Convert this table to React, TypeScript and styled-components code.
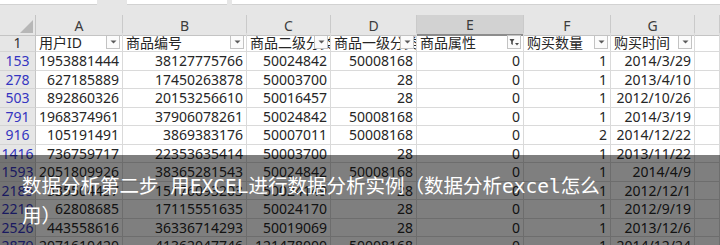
import styled, { createGlobalStyle } from "styled-components";

const GlobalStyle = createGlobalStyle`
  html, body {
    margin: 0;
    padding: 0;
    background: #fff;
  }
  body {
    width: 720px;
    height: 245px;
    overflow: hidden;
  }
`;

const COLS = "36px 87px 124px 84px 86px 107px 87px 84px 1fr";

const Sheet = styled.div`
  position: relative;
  width: 720px;
  height: 245px;
  overflow: hidden;
  background: #fff;
  font-family: "Noto Sans", "Noto Sans CJK SC", sans-serif;
  font-size: 14px;
  color: #262626;
`;

const FormulaBar = styled.div`
  display: flex;
  height: 15px;
  background: #e6e6e6;
`;

const InputBox = styled.div<{ $w?: number; $ml: number }>`
  height: 4px;
  width: ${({ $w }) => ($w ? `${$w}px` : "auto")};
  flex: ${({ $w }) => ($w ? "none" : 1)};
  margin-left: ${({ $ml }) => $ml}px;
  background: #fff;
  border-bottom: 1px solid #d2d2d2;
`;

const Row = styled.div<{ $h: number }>`
  display: grid;
  grid-template-columns: ${COLS};
  height: ${({ $h }) => $h}px;
`;

const Corner = styled.div`
  position: relative;
  background: #e6e6e6;
  border-right: 1px solid #c4c4c4;
  border-bottom: 1px solid #c4c4c4;
  &::after {
    content: "";
    position: absolute;
    right: 2px;
    bottom: 2px;
    border-style: solid;
    border-width: 0 0 13px 13px;
    border-color: transparent transparent #b7b7b7 transparent;
  }
`;

const ColHead = styled.div<{ $selected?: boolean }>`
  display: flex;
  align-items: center;
  justify-content: center;
  background: ${({ $selected }) => ($selected ? "#d2d2d2" : "#e6e6e6")};
  color: #3c3c3c;
  border-right: 1px solid #cacaca;
  border-bottom: ${({ $selected }) =>
    $selected ? "2px solid #8c8c8c" : "1px solid #c4c4c4"};
  box-sizing: border-box;
  font-size: 14px;
`;

const RowHead = styled.div<{ $filtered?: boolean }>`
  display: flex;
  align-items: center;
  justify-content: center;
  background: #e6e6e6;
  color: ${({ $filtered }) => ($filtered ? "#3535c0" : "#333")};
  border-right: 1px solid #c4c4c4;
  border-bottom: 1px solid #d4d4d4;
  box-sizing: border-box;
  white-space: nowrap;
  overflow: hidden;
`;

const Cell = styled.div<{ $align?: "left" | "right" }>`
  position: relative;
  display: flex;
  align-items: center;
  justify-content: ${({ $align }) =>
    $align === "left" ? "flex-start" : "flex-end"};
  padding: 0 3px;
  border-right: 1px solid #dadada;
  border-bottom: 1px solid #dadada;
  box-sizing: border-box;
  white-space: nowrap;
  overflow: hidden;
`;

const FilterButton = styled.div`
  position: absolute;
  top: 2px;
  right: 2px;
  width: 14px;
  height: 14px;
  display: flex;
  align-items: center;
  justify-content: center;
  background: #fbfbfb;
  border: 1px solid #c3c3c3;
  box-sizing: border-box;
`;

const Caption = styled.div`
  position: absolute;
  left: 0;
  right: 0;
  top: 155px;
  bottom: 0;
  padding: 17px 22px 0;
  background: rgba(0, 0, 0, 0.5);
  color: #fff;
  font-family: "DejaVu Sans Mono", "Noto Sans CJK SC", monospace;
  font-size: 19.5px;
  line-height: 30px;
`;

const CaptionText = styled.div`
  max-width: 585px;
`;

function FilterArrow({ active }: { active?: boolean }) {
  if (active) {
    return (
      <svg width="10" height="9" viewBox="0 0 10 9">
        <path d="M0.5 1h5L3.8 3.6V7L2.2 6V3.6z" fill="#4a4a4a" />
        <path d="M6 5h4l-2 2.4z" fill="#4a4a4a" />
      </svg>
    );
  }
  return (
    <svg width="7" height="4" viewBox="0 0 7 4">
      <path d="M0.5 0.5h6L3.5 3.5z" fill="#5a5a5a" />
    </svg>
  );
}

const letters = ["A", "B", "C", "D", "E", "F", "G", ""];
const headers = [
  "用户ID",
  "商品编号",
  "商品二级分类",
  "商品一级分类",
  "商品属性",
  "购买数量",
  "购买时间",
];

const rows: string[][] = [
  ["153", "1953881444", "38127775766", "50024842", "50008168", "0", "1", "2014/3/29"],
  ["278", "627185889", "17450263878", "50003700", "28", "0", "1", "2013/4/10"],
  ["503", "892860326", "20153256610", "50016457", "28", "0", "1", "2012/10/26"],
  ["791", "1968374961", "37906078261", "50024842", "50008168", "0", "1", "2014/3/19"],
  ["916", "105191491", "3869383176", "50007011", "50008168", "0", "2", "2014/12/22"],
  ["1416", "736759717", "22353635414", "50003700", "28", "0", "1", "2013/11/22"],
  ["1593", "2051809926", "38365281543", "50024842", "50008168", "0", "1", "2014/4/9"],
  ["2185", "535504437", "15176093203", "50024149", "28", "0", "1", "2012/12/1"],
  ["2210", "62808685", "17115551635", "50024170", "28", "0", "1", "2012/9/19"],
  ["2526", "443558616", "36336714293", "50019069", "28", "0", "1", "2013/12/6"],
  ["2879", "2071610420", "41362047746", "121478000", "50008168", "0", "1", "2014/12/24"],
];

export default function App() {
  return (
    <>
      <GlobalStyle />
      <Sheet>
        <FormulaBar>
          <InputBox $w={97} $ml={0} />
          <InputBox $w={100} $ml={30} />
          <InputBox $ml={5} />
        </FormulaBar>

        <Row $h={18}>
          <Corner />
          {letters.map((l, i) => (
            <ColHead key={i} $selected={l === "E"}>
              {l}
            </ColHead>
          ))}
        </Row>

        <Row $h={19}>
          <RowHead>1</RowHead>
          {headers.map((h, i) => (
            <Cell key={h} $align="left">
              {h}
              <FilterButton>
                <FilterArrow active={i === 4} />
              </FilterButton>
            </Cell>
          ))}
          <Cell />
        </Row>

        {rows.map(([num, ...vals]) => (
          <Row $h={18.5} key={num}>
            <RowHead $filtered>{num}</RowHead>
            {vals.map((v, i) => (
              <Cell key={i}>{v}</Cell>
            ))}
            <Cell />
          </Row>
        ))}

        <Caption>
          <CaptionText>
            数据分析第二步 用EXCEL进行数据分析实例（数据分析excel怎么用）
          </CaptionText>
        </Caption>
      </Sheet>
    </>
  );
}
